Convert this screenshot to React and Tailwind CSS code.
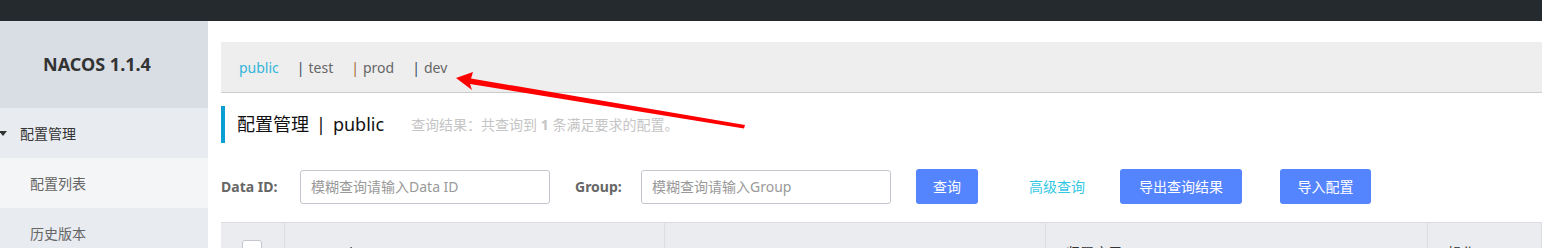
import React from 'react';

// Nacos console: config list page (top of the page only)

const namespaces = [
  { name: 'public', active: true },
  { name: 'test', bar: 'text-[#34495e]' },
  { name: 'prod', bar: 'text-[#a0652e]' },
  { name: 'dev', bar: 'text-[#34495e]' },
];

const columns = [
  { label: 'Data Id', width: 'w-[380px]' },
  { label: 'Group', width: 'w-[381px]' },
  { label: '归属应用', width: 'w-[382px]' },
  { label: '操作', width: 'flex-1' },
];

const font = 'font-["Noto_Sans","Noto_Sans_CJK_SC",sans-serif]';

const Sidebar = () => (
  <div className="w-[208px] shrink-0 flex flex-col">
    <div className="h-[87px] bg-[#d9dde4] flex items-center justify-center pr-[14px] text-[18px] font-bold text-[#333]">
      NACOS 1.1.4
    </div>
    <div className="h-[50px] bg-[#e8ebf0] flex items-center text-[14px] text-[#333]">
      <span className="w-0 h-0 border-l-[4px] border-r-[4px] border-t-[5px] border-l-transparent border-r-transparent border-t-[#333] ml-[-1px] mr-[13px]" />
      配置管理
    </div>
    <div className="h-[50px] bg-[#f4f5f7] flex items-center pl-[30px] text-[14px] text-[#666]">配置列表</div>
    <div className="h-[50px] bg-[#e8ebf0] flex items-center pl-[30px] text-[14px] text-[#666]">历史版本</div>
  </div>
);

const NamespaceBar = () => (
  <div className="h-[51px] bg-[#eeeeee] border-b border-[#cccccc] flex items-center pl-[18px] text-[14px]">
    {namespaces.map((ns) =>
      ns.active ? (
        <span key={ns.name} className="text-[#33b5d9] mr-[18px]">{ns.name}</span>
      ) : (
        <span key={ns.name} className="text-[#666] mr-[18px]">
          <span className={`${ns.bar} mr-[4px]`}>|</span>
          {ns.name}
        </span>
      )
    )}
  </div>
);

const Button = ({ children, className = '' }) => (
  <button className={`h-[35px] bg-[#5584ff] text-white text-[14px] rounded-[3px] ${className}`}>
    {children}
  </button>
);

const SearchRow = () => (
  <div className="flex items-center h-[35px] mt-[26px] text-[14px]">
    <span className="font-bold text-[#666] w-[79px]">Data ID:</span>
    <input
      className="w-[250px] h-[34px] border border-[#c4c6cf] rounded-[3px] pl-[10px] text-[14px] placeholder:text-[#999] outline-none"
      placeholder="模糊查询请输入Data ID"
    />
    <span className="font-bold text-[#666] ml-[25px] w-[66px]">Group:</span>
    <input
      className="w-[250px] h-[34px] border border-[#c4c6cf] rounded-[3px] pl-[10px] text-[14px] placeholder:text-[#999] outline-none"
      placeholder="模糊查询请输入Group"
    />
    <Button className="ml-[25px] w-[62px]">查询</Button>
    <span className="ml-[51px] w-[59px] text-[#33c8e3]">高级查询</span>
    <Button className="ml-[32px] w-[122px]">导出查询结果</Button>
    <Button className="ml-[38px] w-[91px]">导入配置</Button>
  </div>
);

const TableHead = () => (
  <div className="mt-[18px] border-t border-[#dcdee3] bg-[#ebecf0] flex h-[60px] text-[14px] text-[#333]">
    <div className="w-[64px] shrink-0 border-r border-[#dcdee3] pl-[21px] pt-[17px]">
      <div className="w-[20px] h-[20px] bg-white border border-[#c4c6cf] rounded-[3px]" />
    </div>
    {columns.map((col) => (
      <div key={col.label} className={`${col.width} shrink-0 border-r border-[#dcdee3] pl-[20px] pt-[19px]`}>
        {col.label}
      </div>
    ))}
  </div>
);

const Arrow = () => (
  <svg className="absolute left-0 top-0 pointer-events-none" width="1542" height="248">
    <polygon
      points="456,78 473,72 471,78.5 745,125 744,128.5 470,84 472,90"
      fill="#ff0000"
    />
  </svg>
);

export default function App() {
  return (
    <div className={`relative w-[1542px] h-[248px] overflow-hidden bg-white ${font}`}>
      <div className="h-[21px] bg-[#252a2f]" />
      <div className="flex">
        <Sidebar />
        <div className="flex-1 pl-[13px] pt-[21px]">
          <NamespaceBar />
          <div className="flex items-center mt-[13px] h-[37px]">
            <div className="w-[4px] h-[37px] bg-[#0a9fd3]" />
            <span className="ml-[12px] text-[18px] text-[#111]">配置管理<span className="mx-[7px]">|</span>public</span>
            <span className="ml-[27px] text-[14px] text-[#c5c5c5]">
              查询结果：共查询到 <strong className="font-bold">1</strong> 条满足要求的配置。
            </span>
          </div>
          <SearchRow />
          <TableHead />
        </div>
      </div>
      <Arrow />
    </div>
  );
}
